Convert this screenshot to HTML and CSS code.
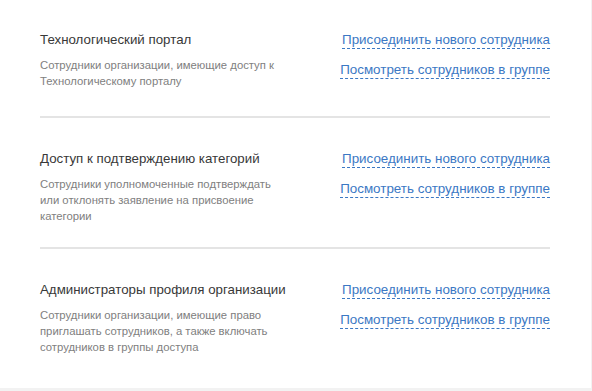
FILE: index.html
```html
<!DOCTYPE html>
<html lang="ru">
<head>
<meta charset="utf-8">
<link rel="stylesheet" href="styles.css">
</head>
<body>
<div class="card">
  <div class="group group-first">
    <div class="info">
      <div class="title">Технологический портал</div>
      <div class="desc">Сотрудники организации, имеющие доступ к Технологическому порталу</div>
    </div>
    <div class="actions">
      <a class="link" href="#">Присоединить нового сотрудника</a>
      <a class="link" href="#">Посмотреть сотрудников в группе</a>
    </div>
  </div>
  <div class="group">
    <div class="info">
      <div class="title">Доступ к подтверждению категорий</div>
      <div class="desc">Сотрудники уполномоченные подтверждать или отклонять заявление на присвоение категории</div>
    </div>
    <div class="actions">
      <a class="link" href="#">Присоединить нового сотрудника</a>
      <a class="link" href="#">Посмотреть сотрудников в группе</a>
    </div>
  </div>
  <div class="group group-last">
    <div class="info">
      <div class="title">Администраторы профиля организации</div>
      <div class="desc">Сотрудники организации, имеющие право приглашать сотрудников, а также включать сотрудников в группы доступа</div>
    </div>
    <div class="actions">
      <a class="link" href="#">Присоединить нового сотрудника</a>
      <a class="link" href="#">Посмотреть сотрудников в группе</a>
    </div>
  </div>
</div>
</body>
</html>
```

FILE: styles.css
```css
html, body {
  margin: 0;
  padding: 0;
  background: #f2f2f2;
  font-family: "Liberation Sans", Arial, sans-serif;
}
.card {
  width: 591px;
  height: 388px;
  background: #ffffff;
  box-sizing: border-box;
  padding: 0 41px 0 40px;
}
.group {
  display: flex;
  justify-content: space-between;
  align-items: flex-start;
  padding: 31px 0 23px;
  border-bottom: 2px solid #e4e4e4;
}
.group-first {
  padding-top: 30px;
  padding-bottom: 27px;
}
.group-last {
  border-bottom: none;
}
.info {
  width: 250px;
}
.title {
  font-size: 13.3px;
  line-height: 20px;
  color: #383838;
}
.desc {
  margin-top: 7px;
  font-size: 11.3px;
  line-height: 16px;
  color: #808080;
}
.actions {
  display: flex;
  flex-direction: column;
  align-items: flex-end;
  gap: 12px;
  padding-top: 1px;
}
.link {
  font-size: 13.4px;
  line-height: 17px;
  color: #3b78c4;
  text-decoration: none;
  border-bottom: 1px dashed #3b78c4;
}
```
